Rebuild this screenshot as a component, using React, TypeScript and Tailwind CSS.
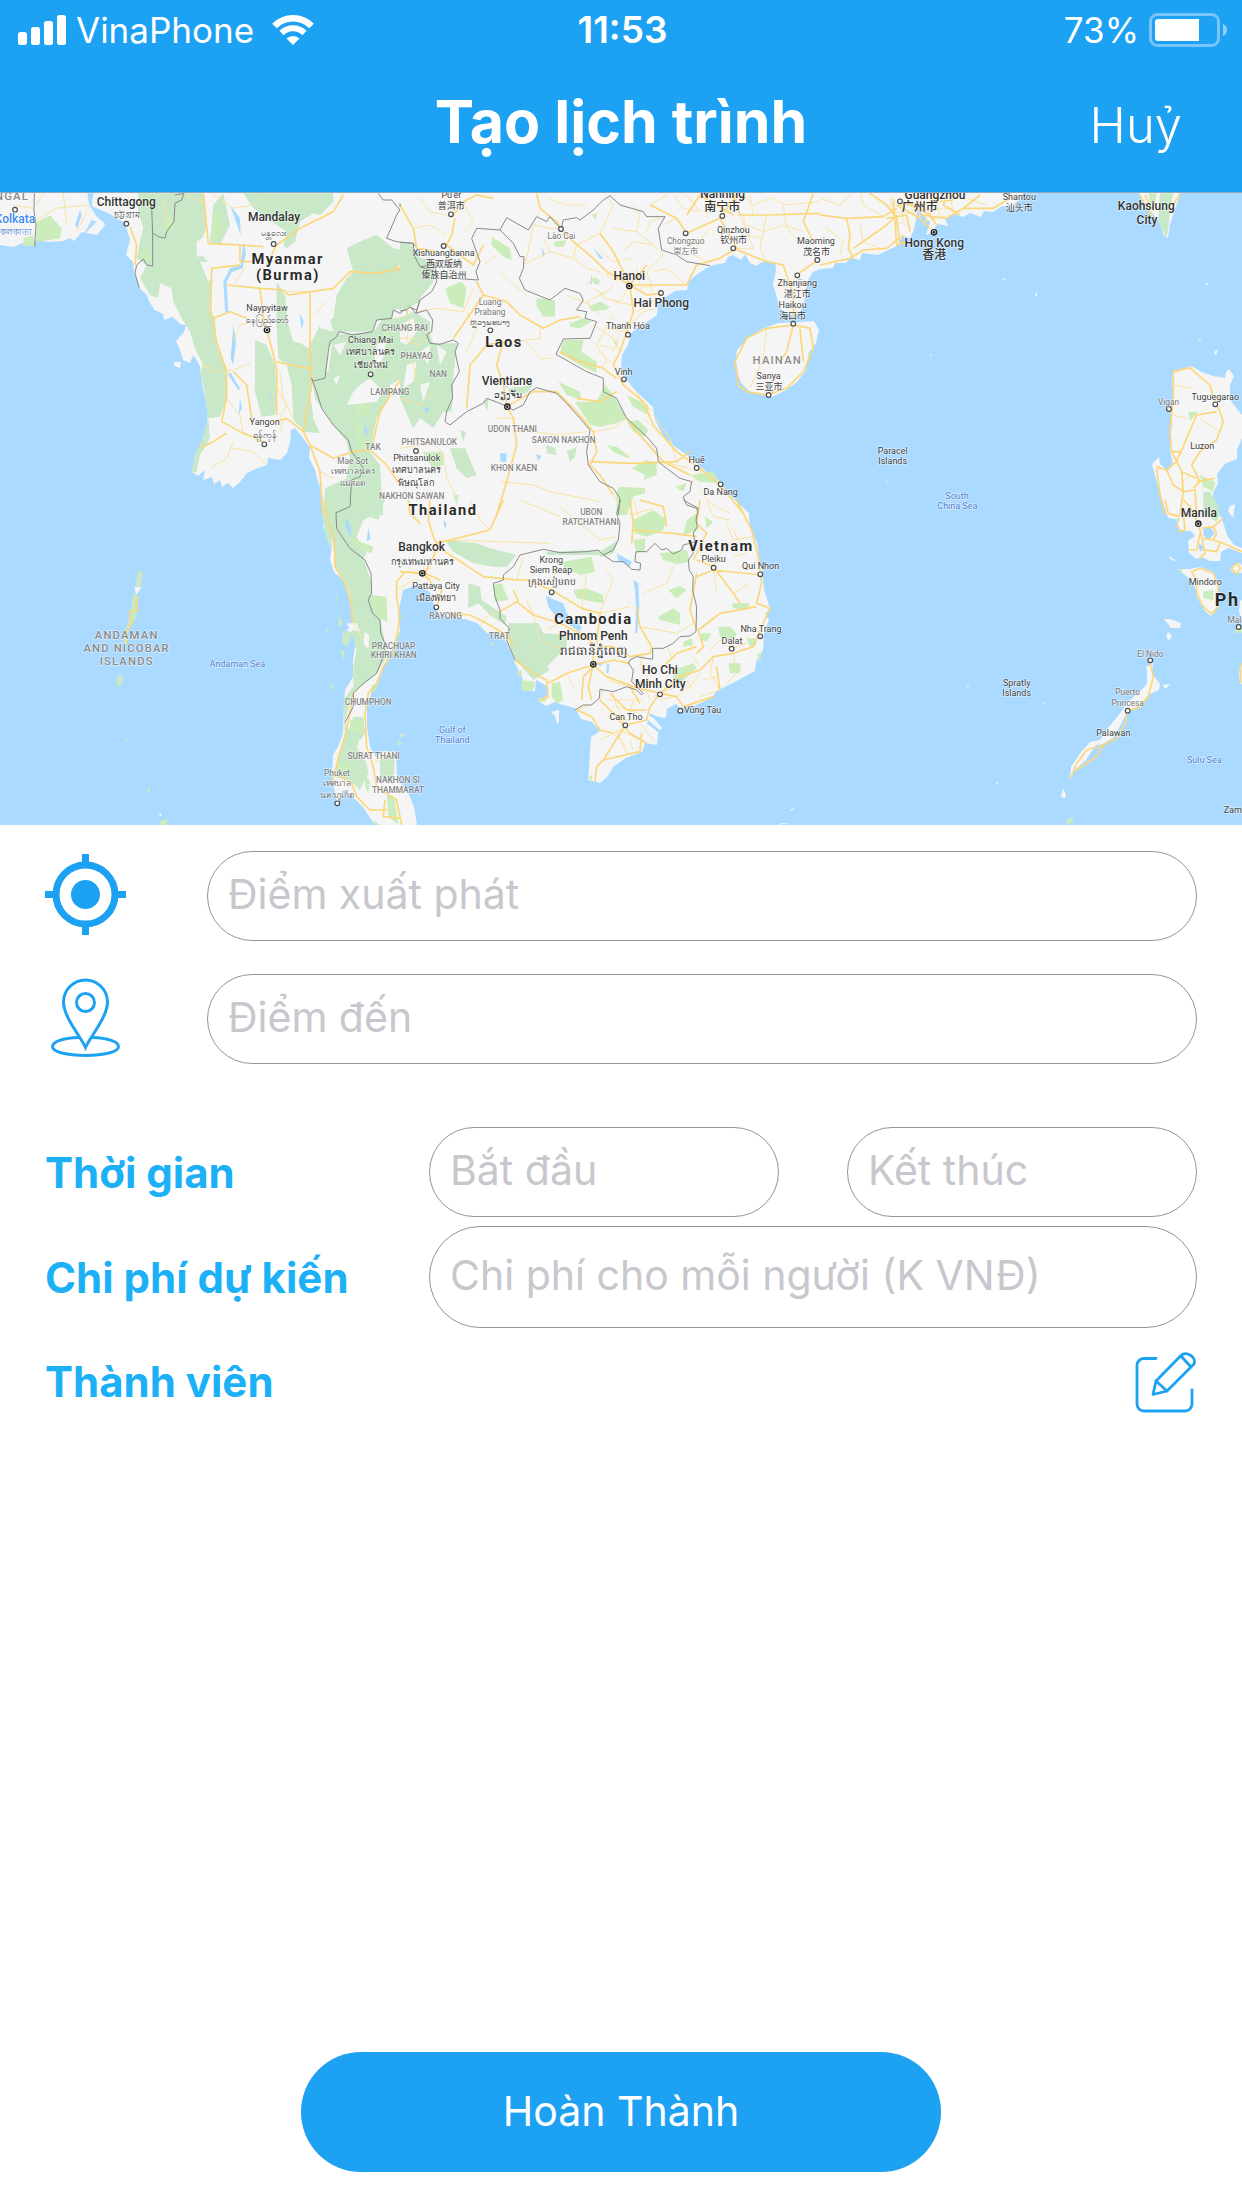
import React from "react";

type Kind = "country" | "city" | "town" | "minor" | "province" | "region" | "sea" | "big" | "link";
type Label = [string, number, number, Kind];

type Tile = {
  x: number;
  y: number;
  green?: string;
  lime?: string;
  pale?: string;
  water?: string;
  highway?: string;
  road?: string;
  lane?: string;
  border?: string;
  towns?: [number, number][];
  capitals?: [number, number][];
  labels: Label[];
};

const labelStyle: Record<Kind, string> = {
  big: "text-[54px] font-bold fill-[#2a2a2a] tracking-widest",
  country: "text-[44px] font-bold fill-[#2a2a2a] tracking-widest",
  city: "text-[36px] font-medium fill-[#333333]",
  town: "text-[27px] fill-[#3f3f3f]",
  minor: "text-[25px] fill-[#757575]",
  province: "text-[25px] font-medium fill-[#858585]",
  region: "text-[34px] font-medium fill-[#8a8a8a] tracking-widest",
  sea: "text-[27px] fill-[#4a7fd0]",
  link: "text-[36px] font-medium fill-[#3f8cf0]",
};

const mainland =
  "M0 190 L0 245 14 247 22 243 33 246 36 240 48 242 63 241 70 238 74 241 82 232 97 235 105 225 100 216 94 207 110 214 118 219 125 223 130 240 126 255 133 262 134 272 139 288 146 294 150 303 155 310 163 314 164 320 173 317 180 324 186 325 184 332 176 341 181 352 187 360 194 356 200 366 201 377 203 388 206 402 208 415 206 432 200 445 196 460 192 472 198 476 205 470 203 480 212 477 214 484 220 480 222 487 228 483 233 488 240 482 247 473 258 468 267 465 268 458 280 460 287 453 290 443 291 430 295 428 303 438 310 448 309 458 315 470 317 478 321 490 323 500 324 515 323 527 332 543 330 560 334 572 343 580 349 597 352 613 355 625 346 630 355 634 355 647 353 660 353 677 345 690 344 706 343 733 339 745 333 755 332 777 337 803 340 797 343 790 353 797 363 807 368 815 375 825 417 825 414 807 407 790 401 783 397 777 396 752 383 751 376 757 370 747 367 727 367 703 372 692 378 683 383 667 393 647 400 630 398 613 401 600 403 590 417 585 430 592 434 604 438 614 450 617 465 619 477 623 487 633 497 633 507 643 513 657 515 663 520 673 523 680 523 690 535 691 536 680 547 686 548 695 538 701 546 706 555 702 563 705 575 708 581 719 592 722 600 731 591 737 589 767 588 780 600 783 608 776 613 767 626 758 642 752 645 743 657 745 658 733 662 728 652 716 666 718 667 709 676 704 680 708 694 706 713 697 716 691 733 683 740 679 755 671 756 662 763 650 764 633 769 620 765 614 770 608 764 590 762 570 759 557 757 543 750 527 749 513 738 503 727 492 722 486 702 468 687 455 674 446 663 435 655 420 653 407 640 395 633 388 626 378 621 368 622 355 628 345 631 333 642 325 650 320 657 315 658 305 664 298 675 291 687 290 689 281 695 276 705 269 713 265 725 263 728 257 733 255 741 260 745 254 750 263 756 266 762 262 775 262 776 270 773 285 777 297 779 308 790 315 800 313 805 298 807 282 813 272 820 269 833 268 835 263 846 263 850 258 860 260 862 253 878 255 888 250 897 246 903 236 910 238 914 230 917 214 916 205 922 214 930 222 926 235 931 233 938 224 948 226 945 219 955 214 963 217 970 213 981 217 984 211 993 212 1002 206 1012 206 1020 199 1024 190Z";

const islands = [
  "M736 361 L737 350 748 338 762 329 778 323 800 322 814 321 819 330 816 343 809 352 806 370 797 382 786 390 770 398 768 394 750 392 741 383 738 374Z",
  "M1138 190 L1181 190 1175 210 1170 224 1168 238 1164 236 1160 223 1152 213 1143 201Z",
  "M1173 371 L1181 369 1191 366 1202 372 1213 376 1225 378 1226 372 1229 369 1234 376 1230 385 1230 400 1242 415 1242 438 1237 450 1237 459 1225 464 1217 474 1218 483 1213 493 1213 507 1221 517 1228 537 1234 545 1242 548 1242 553 1228 548 1221 552 1220 561 1210 561 1201 557 1196 559 1189 553 1188 541 1195 536 1191 531 1183 531 1177 527 1179 520 1168 518 1164 505 1159 490 1154 472 1152 464 1159 457 1160 464 1168 471 1173 465 1170 450 1170 437 1172 425 1171 410 1174 398 1172 383Z",
  "M1178 569 L1190 569 1200 567 1213 572 1218 582 1218 600 1215 612 1211 616 1205 611 1197 597 1194 583Z",
  "M1151 665 L1153 660 1152 674 1160 684 1159 690 1148 695 1140 707 1127 712 1122 722 1114 737 1103 744 1096 745 1086 760 1074 771 1070 779 1071 767 1081 752 1090 742 1100 740 1108 728 1118 716 1128 702 1139 692 1147 684 1147 670 1146 667Z",
  "M1164 619 L1170 619 1181 623 1180 628 1171 628Z",
  "M1168 632 L1172 636 1169 641 1166 636Z",
  "M1162 685 L1170 684 1166 689Z",
  "M1230 506 L1235 504 1233 518 1228 511Z",
  "M1240 601 L1242 600 1242 618 1239 612Z",
  "M1232 566 L1239 563 1242 565 1242 573 1235 573 1230 570Z",
  "M1243 663 L1239 672 1240 684 1243 684Z",
  "M1063 788 L1066 795 1065 798 1061 797Z",
  "M1218 349 L1216 356 1214 352Z M1198 338 L1202 340 1199 341Z M1207 282 L1208 284 1205 285Z",
  "M1003 278 L1006 279 1004 281Z M1037 291 L1037 296 1035 296Z M930 354 L932 355 930 356Z M886 481 L888 482 886 483Z",
  "M967 685 L970 686 967 687Z M1045 702 L1042 704 1046 703Z M1020 727 L1021 729 1019 728Z M996 782 L999 783 996 784Z",
  "M1169 556 L1175 560 1176 562 1170 559Z",
  "M174 362 L181 362 180 368 174 366Z",
  "M178 342 L187 340 188 350 193 355 190 363 183 360 180 350Z",
  "M551 712 L559 710 559 722 557 724 555 716Z",
  "M782 823 L789 823 778 825Z M795 807 L792 811 790 810Z",
  "M400 733 L404 735 402 737Z M401 742 L398 746 402 743Z M160 813 L162 815 159 817Z",
].join(" ");

const tiles: Tile[] = [
  {
    x: 0,
    y: 185,
    green:
      "M415 25 L560 25 610 25 618 130 595 200 625 230 635 280 628 370 645 400 650 480 680 550 680 640 660 695 625 700 630 760 600 810 590 860 575 865 585 810 605 770 625 700 612 610 600 560 610 540 585 490 570 440 545 400 520 350 515 310 480 295 475 340 450 330 420 280 440 240 410 220 420 170 430 130 415 80Z M730 25 L1000 25 1000 50 960 90 940 85 900 110 885 170 860 190 850 180 860 140 800 100 760 70Z M1040 190 L1090 165 1130 150 1180 190 1240 200 1260 190 1260 350 1220 370 1180 375 1175 400 1130 405 1115 440 1020 440 985 490 975 580 935 580 930 620 940 700 960 745 915 740 880 705 875 600 860 540 835 520 830 430 830 290 855 330 865 420 880 470 930 480 960 420 1000 400 1010 330 1040 280 1060 260Z M765 465 L800 480 825 540 830 640 825 690 785 695 765 620Z M935 580 L985 560 1000 450 1120 440 1150 400 1260 400 1260 600 1180 620 1130 700 1110 800 1140 840 1150 990 970 990 975 910 1040 880 1050 820 1040 770 1000 720 945 640Z M640 60 L670 25 690 120 660 180 630 170Z M110 110 L150 92 185 130 180 160 110 170Z",
    lime: "M110 110 L155 92 160 130 185 125 180 160 110 170Z M640 90 L660 80 670 120 650 160 632 160Z M490 100 L520 95 515 130 490 140Z M1060 650 L1100 640 1105 690 1070 690Z M1060 700 L1090 720 1080 760 1110 770 1100 800 1070 780Z M420 200 L450 190 450 235 430 225Z M1150 440 L1170 430 1160 500Z M70 160 L100 150 104 184 70 182Z",
    pale: "M900 180 L920 140 960 170 1000 130 1040 140 1040 200 1000 260 960 300 900 290 880 230Z M1080 600 L1110 580 1150 620 1130 650 1040 660 1060 620Z M1130 480 L1160 460 1150 520 1120 560Z M1000 480 L1040 470 1020 510Z M1170 600 L1240 560 1210 640 1170 690Z M880 450 L920 470 940 500 910 480Z M960 380 L1010 340 990 400 1000 440 960 430Z M600 230 L625 230 640 270 625 290Z M590 170 L620 150 620 210 590 215Z M1000 580 L1020 570 1010 600Z M1190 240 L1240 250 1210 280Z M470 340 L500 320 515 345 490 375 460 375Z",
    water:
      "M262 25 L280 25 275 60 320 100 315 115 290 95 268 60Z M225 120 L240 75 245 90 232 130Z M275 105 L290 110 250 150Z M898 385 L912 410 905 432Z M720 640 L726 670 716 690Z M690 560 L720 610 715 615 685 570Z M1092 715 L1104 740 1095 750Z M810 625 L818 635 808 632Z M730 170 L738 205 728 250 695 262 680 290 685 385 676 385 670 290 690 250 722 240Z M700 420 L708 470 700 540 692 520Z M690 60 L720 100 722 150 712 120Z",
    highway:
      "M610 25 L625 175 720 180 790 185 M720 240 L635 250 632 380 650 470 680 560 680 640 665 710 M680 300 L780 310 850 315 865 330 1000 310 1050 260 1130 265 1200 250 1240 225 M800 240 L830 180 900 130 1000 80 1030 30 M780 310 L790 400 805 450 830 550 830 690 M930 320 L930 480 935 600 910 740 M640 400 L690 380 740 400 M830 530 L870 540 930 550 M700 560 L740 600 755 700 M665 710 L720 740 790 770 M680 745 L640 770 600 790 M830 710 L860 700 910 740 930 780 960 860 968 990 M720 180 L720 230 760 230 M930 780 L1000 820 1060 800 1110 795 1160 840 1200 900 M1220 370 L1225 470 1240 540 1190 600 1140 680 1115 790 M1190 240 L1250 340 M390 125 L410 180 405 240",
    road: "M100 110 L170 70 260 60 M40 60 L100 70 M190 25 L200 120 M270 60 L230 140 M130 25 L110 60 M490 40 L500 110 520 130 M700 300 L740 240 M700 470 L720 420 790 400 M680 640 L720 690 730 750 M630 850 L680 820 700 770 M700 790 L760 800 800 840 M640 550 L600 540 M640 560 L700 555 750 535 M840 560 L850 640 880 700 M850 700 L840 740 M940 390 L980 350 M860 320 L930 320 M640 30 L700 70 760 60 800 30 M560 30 L620 60 M930 490 L920 520 M1180 400 L1260 390 M960 860 L1000 880 M830 610 L860 660 840 700",
    border:
      "M103 25 L102 80 108 120 104 185 M455 60 L458 150 458 243 440 240 430 222 410 240 405 265 418 310 M525 30 L552 25 545 45 525 55 522 110 500 140 495 160 475 155 460 145 M1135 25 L1150 45 1175 45 1200 75 1190 90 1160 160 1190 170 1240 175 1260 200 M1260 345 L1250 375 1225 365 1200 385 1180 375 1175 400 1130 405 1118 440 1060 450 1018 440 1010 455 990 470 985 500 975 580 940 588 935 580 950 620 965 670 1000 720 1045 765 1055 800 1070 820 1090 850 1080 875 1055 885 1050 960 1030 970 1010 985",
    towns: [
      [45, 74],
      [379, 116],
      [821, 177],
      [1112, 568],
      [793, 778],
      [1248, 798],
    ],
    capitals: [[801, 435]],
    labels: [
      ["NGAL", 36, 46, "region"],
      ["Kolkata", 45, 115, "link"],
      ["কলকাতা", 48, 150, "sea"],
      ["Chittagong", 379, 62, "city"],
      ["চট্টগ্রাম", 380, 98, "town"],
      ["Mandalay", 822, 108, "city"],
      ["မန္တလေး", 821, 152, "town"],
      ["Myanmar", 863, 236, "country"],
      ["(Burma)", 864, 285, "country"],
      ["Naypyitaw", 801, 378, "town"],
      ["နေပြည်တော်", 801, 414, "town"],
      ["CHIANG RAI", 1214, 438, "province"],
      ["Chiang Mai", 1112, 475, "town"],
      ["เทศบาลนคร", 1112, 511, "town"],
      ["เชียงใหม่", 1112, 549, "town"],
      ["LAMPANG", 1170, 630, "province"],
      ["Yangon", 794, 721, "town"],
      ["ရန်ကုန်", 794, 758, "town"],
      ["TAK", 1119, 796, "province"],
      ["Mae Sot", 1058, 836, "minor"],
      ["เทศบาลนคร", 1058, 867, "minor"],
      ["แม่สอด", 1058, 903, "minor"],
    ],
  },
  {
    x: 400,
    y: 185,
    green:
      "M0 170 L40 180 45 215 115 230 100 290 60 340 30 370 0 375Z M0 400 L40 380 90 410 90 450 100 475 170 475 160 580 155 680 130 680 100 730 60 700 40 730 0 640Z M150 790 L195 790 230 870 200 880 170 850Z M180 735 L198 740 190 770Z M250 650 L265 640 262 680Z M440 780 L465 790 470 810 440 805Z M500 800 L530 785 525 815 510 830Z M160 930 L175 930 170 960Z M325 610 L400 600 380 625 330 630Z",
    lime: "M275 155 L330 190 335 225 310 215 275 180Z M135 310 L185 290 200 310 190 370 150 355Z M410 340 L465 345 465 395 430 395 410 365Z M490 465 L550 465 545 500 590 530 590 565 540 540 480 505Z M510 415 L550 400 575 410 540 430 510 425Z M565 365 L600 350 630 365 620 375 575 378Z M525 650 L590 650 615 600 640 630 680 700 650 715 600 725 570 720Z M680 710 L715 705 745 735 735 755 700 740Z M475 590 L540 620 545 645 500 630Z M620 780 L650 785 690 815 685 820 640 800Z M695 850 L740 825 770 835 770 870 730 885 735 870Z M575 90 L590 85 590 105Z M580 275 L600 285 595 300 580 295Z M680 630 L745 660 745 690 700 665Z M640 470 L655 465 650 485Z M870 870 L940 860 960 895 900 890Z M650 920 L660 905 735 910 735 925 700 935 680 990 650 990Z M460 170 L500 165 490 185 465 185Z M825 905 L860 895 850 920Z M70 800 L130 800 130 840 100 850 75 820Z",
    pale: "M0 420 L40 400 50 440 20 480 0 470Z M20 540 L50 530 40 590 10 610Z M60 600 L90 590 70 650Z M110 480 L140 500 120 540Z M60 500 L90 480 85 540Z",
    water:
      "M300 805 L320 805 318 830 302 830Z M408 808 L425 812 415 828Z M72 665 L90 672 78 685Z M310 600 L325 605 320 610Z M580 190 L610 220 600 222Z M425 185 L435 210 428 215Z M570 300 L575 270 578 290Z",
    highway:
      "M0 60 L40 130 50 190 110 200 M165 100 L155 150 140 180 220 240 250 180 M160 90 L190 50 230 30 280 40 M410 25 L420 70 470 110 483 132 520 170 580 220 620 260 690 300 M690 300 L640 200 600 145 M690 300 L740 240 M690 300 L740 330 790 325 M690 300 L860 300 890 240 960 220 1000 195 M690 300 L700 380 680 440 660 500 640 540 670 600 730 650 760 720 830 800 900 850 960 900 1030 985 M750 60 L830 100 860 145 960 100 1010 30 M1000 25 L1020 90 1100 90 1260 85 M1000 190 L1100 230 1150 240 1180 330 1180 400 M1240 25 L1210 110 1240 170 M960 100 L1010 190 M1190 270 L1260 220 M1015 600 L1005 530 1040 460 1100 430 1180 420 1230 430 1240 490 1210 560 1160 610 1100 630 1040 620Z M1180 420 L1160 500 1140 530 M1200 430 L1210 530 M860 90 L900 30 1000 90 M310 470 L290 540 310 600 322 665 340 700 350 780 320 890 290 990 M230 290 L250 330 160 460 M250 330 L320 350 360 390 430 430 480 405 540 395 M200 670 L210 540 260 480 310 470 M320 665 L400 620 470 620 530 680 580 740 590 800 570 840 600 870 640 930 M570 830 L700 835 830 830 870 800 M650 620 L600 650 530 640 M680 700 L710 740 790 830 870 870 M480 500 L540 530 610 550 650 580",
    road: "M400 120 L380 220 370 240 M400 120 L450 130 483 132 M370 240 L450 200 520 220 560 250 600 260 M450 200 L430 160 M520 220 L530 180 600 145 M600 145 L640 60 620 35 M640 130 L710 140 720 90 700 60 M710 140 L760 180 790 210 740 260 760 320 M640 300 L610 330 580 310 M690 300 L660 350 610 340 600 320 M600 390 L560 350 620 320 M710 380 L760 350 M640 390 L610 440 590 480 620 530 600 550 M680 440 L620 430 M860 300 L800 250 760 260 M570 360 L500 330 M580 420 L640 460 660 500 M700 360 L640 350 M690 420 L730 380 770 370 M30 400 L20 470 60 480 90 440 M50 380 L110 370 190 380 220 310 M420 430 L420 460 350 470 310 470 M50 600 L40 530 M0 460 L50 460 M340 740 L400 740 470 750 560 740 M300 890 L400 900 450 920 600 950 M290 700 L350 700 M0 790 L60 780 100 770 130 810 M130 810 L140 880 170 940 M750 60 L800 30 M860 30 L900 80 M1100 90 L1080 190 1100 230 M1020 90 L1060 190 1000 190 M1150 60 L1160 130 1200 170 M1050 610 L1090 520 1100 430 M710 620 L750 700 M830 830 L810 760 760 690 M790 830 L860 850 M900 920 L940 960 990 985 M870 900 L910 850 M640 930 L690 990 760 970 M580 740 L640 730 680 700 M0 640 L60 660 100 620 M650 250 L620 270 650 290 M720 300 L710 250 M720 310 L770 300 M670 200 L700 170 760 180 M830 100 L790 120",
    lane: "M1030 30 L1060 60 1110 40 1160 60 1260 50 M1040 120 L1090 140 1150 120 1210 140 M930 130 L900 170 880 210 920 230 M1030 90 L1040 150 1090 160 M820 30 L850 70 900 80 M1060 90 L1050 30 M920 100 L930 50 M600 200 L640 230 700 220 M560 300 L600 260 M740 140 L750 110 780 100 M440 40 L500 60 560 60 M60 40 L90 80 140 90 M190 50 L220 110 190 140 M40 130 L90 120 140 150 M290 210 L250 240 M300 260 L340 300 380 330 M200 380 L230 430 200 500 M380 470 L420 520 460 520 M600 480 L640 490 M610 510 L640 540 M660 440 L640 500 M720 650 L760 680 M730 700 L780 750 M850 840 L880 860",
    border:
      "M0 65 L0 55 M0 172 L40 175 42 210 60 245 105 240 110 290 95 320 60 345 48 385 30 365 20 375 0 378 M48 385 L80 375 98 405 95 440 80 450 90 475 120 478 160 465 175 475 165 500 178 560 155 600 158 640 140 680 135 710 150 720 200 680 250 655 260 640 300 655 340 675 370 660 390 620 410 608 470 625 500 655 540 700 570 735 560 800 565 840 600 890 640 910 660 940 655 990 M60 245 L160 280 235 285 228 260 240 230 215 160 230 130 300 135 320 98 385 135 410 95 440 110 450 95 483 132 490 105 530 98 540 105 580 75 610 45 630 32 660 60 730 80 740 95 795 95 775 130 785 195 830 210 860 230 930 242 M300 135 L340 175 360 215 372 215 370 250 358 280 375 315 450 345 495 310 540 325 550 345 530 375 560 380 555 400 590 410 570 460 490 462 468 508 560 560 610 580 610 620 650 640 680 700 740 755 770 790 775 830 800 850 840 880 875 890 870 920 850 935 860 960 890 970 895 990",
    towns: [
      [153, 88],
      [131, 183],
      [483, 132],
      [857, 145],
      [967, 93],
      [1000, 190],
      [1252, 225],
      [1192, 271],
      [1180, 416],
      [783, 324],
      [684, 449],
      [271, 436],
      [672, 583],
      [1106, 630],
      [890, 849],
      [962, 898],
    ],
    capitals: [
      [688, 303],
      [322, 665],
    ],
    labels: [
      ["Pu'er", 154, 40, "town"],
      ["普洱市", 154, 73, "town"],
      ["Nanning", 968, 40, "city"],
      ["南宁市", 967, 77, "city"],
      ["Qinzhou", 1000, 143, "town"],
      ["钦州市", 1001, 175, "town"],
      ["Chongzuo", 857, 176, "minor"],
      ["崇左市", 857, 207, "minor"],
      ["Maoming", 1248, 177, "town"],
      ["茂名市", 1250, 209, "town"],
      ["Lào Cai", 484, 162, "minor"],
      ["Xishuangbanna", 131, 214, "town"],
      ["西双版纳", 132, 246, "town"],
      ["傣族自治州", 132, 278, "town"],
      ["Hanoi", 688, 285, "city"],
      ["Hai Phong", 784, 365, "city"],
      ["Zhanjiang", 1192, 303, "town"],
      ["湛江市", 1192, 335, "town"],
      ["Haikou", 1178, 369, "town"],
      ["海口市", 1178, 401, "town"],
      ["Thanh Hóa", 684, 433, "town"],
      ["Luang", 270, 360, "minor"],
      ["Prabang", 270, 389, "minor"],
      ["ຫຼວງພະບາງ", 270, 420, "minor"],
      ["Laos", 312, 486, "country"],
      ["HAINAN", 1132, 537, "region"],
      ["Sanya", 1106, 583, "town"],
      ["三亚市", 1107, 614, "town"],
      ["Vinh", 671, 569, "town"],
      ["PHAYAO", 50, 521, "province"],
      ["NAN", 115, 575, "province"],
      ["Vientiane", 321, 599, "city"],
      ["ວຽງຈັນ", 323, 640, "town"],
      ["UDON THANI", 337, 742, "province"],
      ["SAKON NAKHON", 491, 774, "province"],
      ["PHITSANULOK", 88, 781, "province"],
      ["Phitsanulok", 50, 828, "town"],
      ["เทศบาลนคร", 48, 865, "town"],
      ["พิษณุโลก", 48, 903, "town"],
      ["KHON KAEN", 342, 858, "province"],
      ["Huế", 890, 833, "town"],
      ["Da Nang", 962, 929, "town"],
      ["NAKHON SAWAN", 35, 941, "province"],
    ],
  },
  {
    x: 820,
    y: 185,
    green: "M1020 25 L1060 25 1050 70 1045 130 1040 160 1015 110Z M1150 920 L1170 920 1195 960 1195 990 1150 990Z",
    lime: "M985 25 L1010 25 1005 60 990 50Z M1105 680 L1135 680 1110 708Z M1140 870 L1185 890 1180 920 1150 905Z M1135 460 L1145 462 1140 468Z",
    highway:
      "M0 90 L80 100 190 95 230 70 M0 240 L90 220 130 195 200 190 250 150 M80 100 L90 150 85 190 100 220 M100 190 L200 120 230 90 M150 25 L200 60 230 100 240 180 M230 60 L300 100 330 130 M300 90 L380 100 430 70 520 70 570 40 M260 25 L270 60 330 90 M340 25 L330 90 350 120 M380 25 L370 60 420 90 M430 70 L480 30 M260 60 L400 45 M220 40 L230 180 260 170 M200 100 L260 90 270 140 M960 30 L980 70 1000 100 M975 30 L1000 80 M1080 25 L1060 60 M1060 560 L1110 548 1140 575 1170 600 1180 640 1200 680 1210 710 1190 765 1140 800 1115 840 1140 890 1120 910 M1060 560 L1060 640 1050 740 1055 800 1085 860 1090 920 1080 990 M1190 680 L1130 690 1100 760 1080 810 M1055 800 L1080 800 1070 830 1040 855 1010 845 M1085 860 L1130 880 M1090 920 L1125 915 1130 990 M1040 855 L1060 900 1090 920 M1010 850 L1020 930 1035 990 M1130 890 L1185 880",
    road: "M0 40 L60 60 90 30 M120 25 L130 60 190 95 M20 130 L70 170 60 210 M120 120 L130 170 180 190 M1060 690 L1100 700 M1140 700 L1200 740 M1060 600 L1120 610 M440 40 L500 60 M1110 870 L1090 890",
    lane: "M210 60 L300 60 M210 80 L290 85 M230 110 L260 120 M240 40 L250 110 M290 30 L300 100 M310 40 L320 110 M350 40 L360 100 M270 75 L400 70 M310 110 L370 95 M390 30 L400 80 M210 40 L230 130",
    towns: [
      [240, 49],
      [1186, 658],
      [1047, 672],
    ],
    capitals: [[342, 142]],
    labels: [
      ["Guangzhou", 345, 41, "city"],
      ["广州市", 299, 79, "city"],
      ["Shantou", 598, 45, "town"],
      ["汕头市", 598, 77, "town"],
      ["Kaohsiung", 979, 76, "city"],
      ["City", 981, 118, "city"],
      ["Hong Kong", 343, 185, "city"],
      ["香港", 343, 221, "city"],
      ["Vigan", 1046, 661, "minor"],
      ["Tuguegarao", 1186, 645, "town"],
      ["Luzon", 1147, 792, "town"],
      ["Paracel", 218, 807, "town"],
      ["Islands", 218, 838, "town"],
      ["South", 411, 941, "sea"],
    ],
  },
  {
    x: 0,
    y: 500,
    green:
      "M975 0 L1155 0 1135 60 1110 50 1090 60 1070 110 1100 160 1090 175 1115 250 1115 300 1140 350 1150 400 1160 470 1130 520 1060 580 1035 660 1045 690 1060 650 1090 650 1095 700 1070 740 1100 790 1105 820 1080 870 1050 840 1020 835 1000 830 1015 770 1035 700 1030 600 1060 560 1060 500 1070 450 1055 400 1060 340 1050 280 1030 235 1005 200 1000 130 975 80Z M965 45 L975 40 990 90 995 150 980 120Z M1140 780 L1185 760 1180 850 1140 830Z M415 212 L428 212 425 260 405 262Z M400 280 L415 290 410 350 385 390 375 440 370 415 388 350Z M350 528 L368 525 366 555 350 560Z M1100 560 L1135 550 1125 575 1100 580Z M1030 390 L1060 400 1040 440 1025 430Z M1015 345 L1030 370 1015 385Z M1020 450 L1035 455 1030 480Z M1008 283 L1014 295 1008 298Z M985 670 L1000 658 985 675Z M985 548 L1000 555 1002 575Z M378 715 L386 718 380 725Z M1120 960 L1140 975 1125 975Z M1190 720 L1208 728 1196 735Z M975 378 L990 400 980 395Z",
    lime: "M1115 285 L1160 290 1162 365 1130 350 1110 315Z M1055 115 L1120 140 1115 160 1070 145Z M1095 820 L1110 845 1105 880 1095 860Z M1160 880 L1185 900 1195 975 1165 950Z M480 962 L502 958 500 975 478 975Z M1050 660 L1090 660 1080 700 1050 690Z M440 868 L452 865 448 878Z M1190 395 L1200 398 1195 415Z M1020 785 L1050 790 1045 820 1015 815Z",
    pale: "M1095 395 L1108 405 1105 450 1090 430Z M1040 370 L1070 370 1080 395 1050 388Z M1085 560 L1120 545 1105 600 1095 640 1075 650Z M1110 70 L1120 90 1115 130 1080 125Z M1075 720 L1100 715 1100 740 1080 745Z M403 262 L425 262 408 285Z",
    water: "M1040 50 L1055 90 1050 110 1035 75Z M1105 85 L1112 115 1100 125Z",
    highway:
      "M972 0 L985 60 1003 120 1005 200 1035 250 1055 310 1057 370 M1060 580 L1050 640 1035 710 1015 770 1010 800 1000 820 M1260 220 L1215 215 1190 245 1190 290 1200 350 1190 410 1180 460 1150 500 1130 550 1105 580 1095 640 1100 740 1120 800 1130 860 1190 900 1205 975 M1020 830 L1055 850 1070 890 1110 930 1160 930 M1155 900 L1150 950 1200 955 M408 285 L413 330 390 335 395 370 380 395 380 430 M1225 0 L1230 40 1260 70 M1000 820 L998 850",
    road: "M1190 270 L1240 240 1260 240 M1120 790 L1170 760 M1060 370 L1090 420",
    border:
      "M1052 0 L1050 20 1008 38 1010 85 1050 145 1095 180 1113 220 1115 280 1105 300 1118 340 1140 360 1142 400 1155 430 1150 470 1130 520 1085 555 1060 580 1060 620 1035 667",
    towns: [[1012, 910]],
    labels: [
      ["ANDAMAN", 380, 417, "region"],
      ["AND NICOBAR", 380, 456, "region"],
      ["ISLANDS", 380, 495, "region"],
      ["Andaman Sea", 712, 502, "sea"],
      ["PRACHUAP", 1181, 446, "province"],
      ["KHIRI KHAN", 1181, 475, "province"],
      ["CHUMPHON", 1105, 615, "province"],
      ["SURAT THANI", 1121, 777, "province"],
      ["Phuket", 1011, 827, "minor"],
      ["เทศบาล", 1011, 859, "minor"],
      ["นครภูเก็ต", 1011, 895, "minor"],
      ["NAKHON SI", 1194, 849, "province"],
      ["THAMMARAT", 1194, 878, "province"],
    ],
  },
  {
    x: 400,
    y: 500,
    green:
      "M135 120 L230 130 270 145 350 165 320 200 280 200 220 190 160 155Z M205 250 L240 260 245 300 320 350 315 375 270 345 235 310 205 325Z M325 370 L415 370 430 400 500 405 500 440 440 500 450 510 400 540 340 470 325 420Z M270 425 L285 430 280 442Z M600 155 L655 120 640 160 600 172Z M440 155 L600 150 600 165 440 165Z M350 515 L365 510 365 530 350 525Z M0 700 L8 700 8 710 0 710Z",
    lime: "M490 185 L575 170 585 215 540 225 520 215 490 200Z M520 270 L560 265 610 285 610 310 580 305 530 295Z M280 255 L305 250 325 300 285 305Z M805 270 L840 258 860 270 830 295Z M775 350 L820 325 840 340 840 375 780 360Z M700 60 L760 30 800 60 790 90 740 110 705 100Z M860 60 L890 40 895 90 850 105Z M780 160 L860 150 870 185 830 192 790 180Z M820 510 L880 490 890 505 840 550 820 540Z M985 490 L1022 490 1020 520 990 520Z M905 400 L935 400 920 425 900 420Z M1040 415 L1065 415 1070 435 1050 440Z M455 550 L480 545 490 600 470 610 455 590Z M365 540 L405 545 400 570 365 572Z M415 595 L440 595 435 605 415 605Z M1070 460 L1085 460 1080 485Z M700 120 L735 115 735 150 710 160Z M915 50 L940 65 920 85Z M995 310 L1050 310 1040 330 1000 325Z M565 830 L578 825 572 845Z M850 425 L875 415 880 435 850 440Z M0 725 L5 730 0 735Z M955 380 L990 380 1010 400 1000 420 960 410Z",
    water:
      "M438 288 L465 300 490 310 500 340 545 380 540 395 500 370 460 340 445 320Z M700 240 L715 250 718 320 712 400 706 400 708 320 705 270Z M620 490 L628 495 625 520 620 520Z M130 60 L140 70 135 90Z M592 485 L610 490 600 500Z M745 660 L790 700 785 705 740 670Z M748 640 L800 660 795 665 750 650Z M650 160 L695 185 690 200 655 180Z M850 528 L840 545 835 540Z",
    highway:
      "M90 0 L85 60 100 110 115 140 75 220 M75 220 L120 240 M110 130 L270 90 310 0 M110 140 L190 190 250 230 350 240 M0 215 L70 220 M75 225 L100 255 125 270 110 320 M150 340 L210 345 260 370 310 400 340 430 M300 335 L350 305 400 345 480 370 540 400 580 430 580 495 M350 240 L380 240 455 270 545 325 600 340 590 430 M340 270 L355 305 M345 480 L400 520 440 540 445 590 420 600 M580 495 L500 520 445 550 M580 495 L640 480 690 490 M580 495 L620 530 700 560 780 580 M580 495 L565 560 575 600 M580 500 L550 530 545 600 M600 440 L640 440 690 470 750 460 755 440 720 380 710 320 M780 580 L750 620 740 660 700 670 676 676 610 780 590 800 585 845 M780 580 L830 590 850 620 940 590 M780 580 L840 530 900 510 940 470 1000 460 1060 440 1085 380 1110 325 1070 310 1085 250 1075 170 1055 90 1040 60 1010 0 M740 630 L680 630 630 580 M600 600 L650 650 690 700 740 730 M610 780 L720 755 725 700 M640 700 L600 690 575 650 530 630 M895 390 L960 340 1070 320 M890 180 L940 200 1000 280 1020 310 M895 390 L910 440 890 460 M900 0 L890 70 920 100 900 140 880 180 M1085 225 L940 210 890 230 M690 0 L700 70 695 130 M700 90 L820 100 890 110 M890 220 L870 330 890 390 M790 500 L830 460 890 440 M950 500 L960 570 M690 560 L720 610 M720 0 L790 20 800 80",
    road: "M120 120 L300 125 450 130 M210 0 L240 60 270 90 M360 0 L480 50 M480 20 L600 120 650 110 M350 240 L370 170 M400 345 L380 300 M455 270 L470 200 M545 325 L560 220 M600 340 L640 240 620 210 M720 380 L830 400 880 370 M730 280 L800 250 820 200 M600 340 L690 320 M480 370 L440 390 M500 520 L520 560 M690 560 L620 540 M600 600 L610 570 M640 580 L650 620 676 676 M700 600 L690 640 M640 700 L680 740 M600 720 L660 690 720 720 M650 690 L680 760 M720 670 L760 720 M940 200 L960 160 1000 120 980 70 M1000 120 L1060 110 M1020 130 L1000 90 M1000 280 L1050 250 M950 280 L940 200 M995 446 L960 420 930 450 M995 446 L1040 430 M1000 460 L1010 520 980 550 M940 470 L930 520 960 570 900 590 M830 590 L870 560 900 520 M790 560 L740 540 M800 530 L830 500 M780 600 L820 590 M730 460 L720 500 760 560 M530 630 L580 610 M700 0 L720 60 M920 0 L940 50 990 60 M400 345 L420 420 490 450 M240 380 L260 350 300 335",
    lane: "M55 215 L90 205 M60 230 L95 235 M70 200 L80 240 M620 600 L680 600 730 600 M650 620 L720 640 M620 650 L690 660 M750 600 L740 570 M760 590 L830 560 M860 540 L880 570 M880 470 L900 500 M910 540 L950 530 M690 720 L700 750 M800 440 L820 480 M1020 200 L1060 200 M1000 170 L1040 160",
    border:
      "M662 0 L650 40 660 70 655 120 640 150 610 165 595 150 560 155 480 158 430 148 360 165 340 200 310 225 310 240 280 250 285 290 300 330 300 355 328 385 320 420 345 480 M610 165 L640 185 670 185 695 208 720 210 722 190 705 185 708 155 740 155 765 130 785 150 800 145 820 162 845 150 850 135 870 130 880 160 865 180 868 210 880 230 878 270 890 320 888 395 870 408 840 410 820 430 790 445 758 445 758 478 710 470 690 480 685 490 700 510 695 545 730 580 725 585 710 570 680 560 640 575 600 568 598 595 575 615 550 615 525 630 M850 0 L895 25 888 60 892 80 880 100 885 125 870 130",
    towns: [
      [941, 203],
      [1081, 223],
      [455, 277],
      [109, 322],
      [1081, 409],
      [995, 446],
      [780, 583],
      [841, 632],
      [676, 676],
    ],
    capitals: [
      [67, 220],
      [580, 493],
    ],
    labels: [
      ["Thailand", 129, 44, "country"],
      ["UBON", 574, 45, "province"],
      ["RATCHATHANI", 572, 74, "province"],
      ["Bangkok", 65, 154, "city"],
      ["กรุงเทพมหานคร", 68, 195, "town"],
      ["Krong", 454, 188, "town"],
      ["Siem Reap", 453, 220, "town"],
      ["ក្រុងសៀមរាប", 455, 254, "town"],
      ["Vietnam", 963, 152, "country"],
      ["Pleiku", 941, 187, "town"],
      ["Qui Nhơn", 1082, 208, "town"],
      ["Pattaya City", 108, 267, "town"],
      ["เมืองพัทยา", 109, 302, "town"],
      ["RAYONG", 137, 357, "province"],
      ["TRAT", 298, 416, "province"],
      ["Cambodia", 580, 371, "country"],
      ["Phnom Penh", 580, 421, "city"],
      ["រាជធានីភ្នំពេញ", 580, 466, "city"],
      ["Nha Trang", 1083, 395, "town"],
      ["Dalat", 996, 431, "town"],
      ["Ho Chi", 780, 523, "city"],
      ["Minh City", 781, 565, "city"],
      ["Vũng Tàu", 908, 638, "town"],
      ["Can Tho", 678, 659, "town"],
      ["Gulf of", 157, 698, "sea"],
      ["Thailand", 157, 730, "sea"],
    ],
  },
  {
    x: 820,
    y: 500,
    green: "M1150 0 L1185 0 1200 45 1190 65 1165 50Z",
    lime: "M1150 275 L1180 270 1180 300 1150 295Z M1245 390 L1266 385 1266 398 1245 398Z M740 960 L762 950 755 968 740 972Z M1075 210 L1090 205 1085 218Z M1063 55 L1080 55 1075 70Z",
    water: "M1150 85 L1170 80 1185 100 1165 120 1150 105Z M1138 130 L1150 140 1145 155 1135 145Z",
    highway:
      "M1135 70 L1145 110 1155 160 1140 175 M1145 85 L1180 80 1190 100 1180 120 1150 115 M1180 120 L1210 130 1266 155 M1110 150 L1130 150 1140 100 M1155 150 L1190 155 1200 130 M1180 80 L1210 55 M1035 0 L1045 40 1080 50 M1070 70 L1080 95 1095 90 1090 40 M1090 0 L1110 20 1135 70 M1115 215 L1140 205 1180 220 1195 260 1195 320 1175 342 1150 320 1130 280 1130 240Z M990 485 L1000 530 985 590 960 620 920 635 M920 635 L915 670 890 715 850 735 800 750 770 790 752 835 M850 735 L830 770 800 790 770 810 M1235 205 L1250 190 1262 205 1250 222Z M1262 490 L1262 550",
    towns: [
      [991, 481],
      [923, 632],
      [1256, 381],
    ],
    capitals: [[1135, 71]],
    labels: [
      ["China Sea", 412, 28, "sea"],
      ["Manila", 1137, 52, "city"],
      ["Mindoro", 1156, 254, "town"],
      ["Ph", 1222, 319, "big"],
      ["Malay", 1256, 370, "minor"],
      ["El Nido", 991, 470, "minor"],
      ["Spratly", 590, 557, "town"],
      ["Islands", 590, 588, "town"],
      ["Puerto", 923, 586, "minor"],
      ["Princesa", 923, 618, "minor"],
      ["Palawan", 880, 707, "town"],
      ["Sulu Sea", 1153, 789, "sea"],
      ["Zamb", 1246, 940, "town"],
    ],
  },
];

const at = (t: Tile) => `translate(${t.x} ${t.y}) scale(0.3333)`;

function TripMap() {
  return (
    <svg
      role="img"
      aria-label="Bản đồ"
      viewBox="0 192 1242 633"
      preserveAspectRatio="xMidYMid slice"
      className="block aspect-[1242/633] w-full bg-[#aadaff]"
    >
      <path d={mainland} fill="#f5f5f5" />
      <path d={islands} fill="#f5f5f5" />
      {tiles.map((t) => (
        <g key={`land-${t.x}-${t.y}`} transform={at(t)} fill="none" strokeLinejoin="round">
          <path d={t.green} fill="#c8e8c8" />
          <path d={t.lime} fill="#cbedbb" />
          <path d={t.pale} fill="#f5f5f5" />
          <path d={t.water} fill="#aadaff" />
          <path d={t.lane} stroke="#fbe5ab" strokeWidth="3" />
          <path d={t.road} stroke="#fbe2a0" strokeWidth="3" />
          <path d={t.highway} stroke="#fcd77a" strokeWidth="5" />
          <path d={t.border} stroke="#8a8a8a" strokeWidth="3" />
        </g>
      ))}
      {tiles.map((t) => (
        <g key={`labels-${t.x}-${t.y}`} transform={at(t)}>
          {(t.towns ?? []).map(([x, y]) => (
            <circle key={`${x}-${y}`} cx={x} cy={y} r="7" fill="#ffffff" stroke="#4a4a4a" strokeWidth="3.5" />
          ))}
          {(t.capitals ?? []).map(([x, y]) => (
            <g key={`${x}-${y}`}>
              <circle cx={x} cy={y} r="8" fill="#ffffff" stroke="#222222" strokeWidth="4" />
              <circle cx={x} cy={y} r="4" fill="#222222" />
            </g>
          ))}
          <g
            textAnchor="middle"
            stroke="#ffffff"
            strokeOpacity="0.6"
            strokeWidth="4"
            strokeLinejoin="round"
            className="font-[Roboto,'Noto_Sans','Noto_Sans_CJK_SC',sans-serif] [paint-order:stroke]"
          >
            {t.labels.map(([text, x, y, kind]) => (
              <text key={`${text}-${x}-${y}`} x={x} y={y} className={labelStyle[kind]}>
                {text}
              </text>
            ))}
          </g>
        </g>
      ))}
      <path d="M0 192.5H1242" stroke="#8fa9bd" strokeWidth="1" />
    </svg>
  );
}

function SignalIcon() {
  return (
    <svg viewBox="0 0 48 30" className="h-[30px] w-12" fill="currentColor" aria-hidden="true">
      <rect x="0" y="17" width="9" height="13" rx="2.5" />
      <rect x="13" y="12" width="9" height="18" rx="2.5" />
      <rect x="26" y="6" width="9" height="24" rx="2.5" />
      <rect x="39" y="0" width="9" height="30" rx="2.5" />
    </svg>
  );
}

function WifiIcon() {
  return (
    <svg viewBox="0 0 42 30" className="h-[30px] w-[42px]" aria-hidden="true">
      <path d="M2.5 11 A26 26 0 0 1 39.5 11" fill="none" stroke="currentColor" strokeWidth="6.5" />
      <path d="M9.5 18 A16.5 16.5 0 0 1 32.5 18" fill="none" stroke="currentColor" strokeWidth="6" />
      <path d="M14.5 23.5 A9.5 9.5 0 0 1 27.5 23.5 L21 30Z" fill="currentColor" />
    </svg>
  );
}

function BatteryIcon() {
  return (
    <svg viewBox="0 0 78 34" className="h-[34px] w-[78px]" aria-hidden="true">
      <rect x="1.5" y="1.5" width="68" height="31" rx="7" fill="none" stroke="currentColor" strokeOpacity="0.4" strokeWidth="3" />
      <path d="M9 6H50V28H9A3 3 0 0 1 6 25V9A3 3 0 0 1 9 6Z" fill="currentColor" />
      <path d="M74 11Q78 13 78 17T74 23Z" fill="currentColor" fillOpacity="0.5" />
    </svg>
  );
}

function TargetIcon() {
  return (
    <svg viewBox="0 0 81 81" className="size-[81px]" fill="none" stroke="#1da1f2" strokeWidth="7" aria-hidden="true">
      <circle cx="40.5" cy="40.5" r="29.5" />
      <circle cx="40.5" cy="40.5" r="14.5" fill="#1da1f2" stroke="none" />
      <path d="M40.5 0V10M40.5 71V81M0 40.5H10M71 40.5H81" />
    </svg>
  );
}

function PinIcon() {
  return (
    <svg viewBox="0 0 81 81" className="size-[81px]" fill="none" stroke="#1da1f2" strokeWidth="3" aria-hidden="true">
      <path d="M34 60.5C18 61 7.5 64.5 7.5 69.5C7.5 75 22 78.5 40.5 78.5S73.5 75 73.5 69.5C73.5 64.5 63 61 47 60.5" />
      <path d="M40.5 70.5C36 60 18.5 40 18.5 25A22 22 0 0 1 62.5 25C62.5 40 45 60 40.5 70.5Z" />
      <circle cx="40.5" cy="25.5" r="9" />
    </svg>
  );
}

function EditIcon() {
  return (
    <svg
      viewBox="0 0 62 62"
      className="size-[62px]"
      fill="none"
      stroke="#1da1f2"
      strokeWidth="2.8"
      strokeLinecap="round"
      strokeLinejoin="round"
      aria-hidden="true"
    >
      <path d="M21 7.5H9A7 7 0 0 0 2 14V53A7 7 0 0 0 9 60H50A7 7 0 0 0 57 53V39" />
      <path d="M18 43.5L21 30L46 4.5C51 -0.5 62 6 59 13L32 40Z" />
      <path d="M21 30L32 40M46 5L55.5 15.5" />
    </svg>
  );
}

const field =
  "min-w-0 flex-1 rounded-full border border-[#949499] bg-white px-5 pb-[3px] text-[41px] text-black outline-none placeholder:text-[#c7c7cd] placeholder:opacity-100";
const caption = "w-[384px] shrink-0 text-[42px] font-bold text-[#1cb0f6]";

export default function App() {
  return (
    <main className="flex min-h-screen flex-col bg-white font-[Inter,'Noto_Sans',sans-serif]">
      <header className="bg-[#1da1f2] text-white">
        <div className="grid h-[60px] grid-cols-[1fr_auto_1fr] items-center pl-[18px] pr-[15px] text-[35px]">
          <div className="flex items-center gap-2.5">
            <SignalIcon />
            <span>VinaPhone</span>
            <span className="pl-2">
              <WifiIcon />
            </span>
          </div>
          <time className="text-[37px] font-semibold">11:53</time>
          <div className="flex items-center justify-end gap-2.5">
            <span>73%</span>
            <BatteryIcon />
          </div>
        </div>
        <div className="grid h-[132px] grid-cols-[1fr_auto_1fr] items-start px-[60px] pt-6">
          <h1 className="col-start-2 text-[59px] leading-[76px] font-bold">Tạo lịch trình</h1>
          <button type="button" className="justify-self-end text-[49px] leading-[84px] font-light">
            Huỷ
          </button>
        </div>
      </header>

      <TripMap />

      <form className="flex flex-1 flex-col px-[45px] pt-[26px] pb-9" onSubmit={(e) => e.preventDefault()}>
        <div className="flex h-[90px] items-stretch">
          <label htmlFor="from" aria-label="Điểm xuất phát" className="flex w-[162px] shrink-0 items-start pt-[3px]">
            <TargetIcon />
          </label>
          <input id="from" type="text" placeholder="Điểm xuất phát" className={field} />
        </div>
        <div className="mt-[33px] flex h-[90px] items-stretch">
          <label htmlFor="to" aria-label="Điểm đến" className="flex w-[162px] shrink-0 items-start pt-[3px]">
            <PinIcon />
          </label>
          <input id="to" type="text" placeholder="Điểm đến" className={field} />
        </div>

        <div className="mt-[63px] flex h-[90px] items-stretch">
          <label htmlFor="start" className={`${caption} self-center`}>
            Thời gian
          </label>
          <div className="flex min-w-0 flex-1 gap-[68px]">
            <input id="start" type="text" placeholder="Bắt đầu" className={field} />
            <input type="text" aria-label="Kết thúc" placeholder="Kết thúc" className={field} />
          </div>
        </div>
        <div className="mt-[9px] flex h-[102px] items-stretch">
          <label htmlFor="cost" className={`${caption} self-center`}>
            Chi phí dự kiến
          </label>
          <input id="cost" type="text" placeholder="Chi phí cho mỗi người (K VNĐ)" className={field} />
        </div>
        <div className="mt-[22px] flex items-center justify-between">
          <h2 className={caption}>Thành viên</h2>
          <button type="button" aria-label="Sửa thành viên">
            <EditIcon />
          </button>
        </div>

        <button
          type="submit"
          className="mx-auto mt-auto h-[120px] w-[640px] max-w-full rounded-full bg-[#1da1f2] text-[41px] text-white"
        >
          Hoàn Thành
        </button>
      </form>
    </main>
  );
}
